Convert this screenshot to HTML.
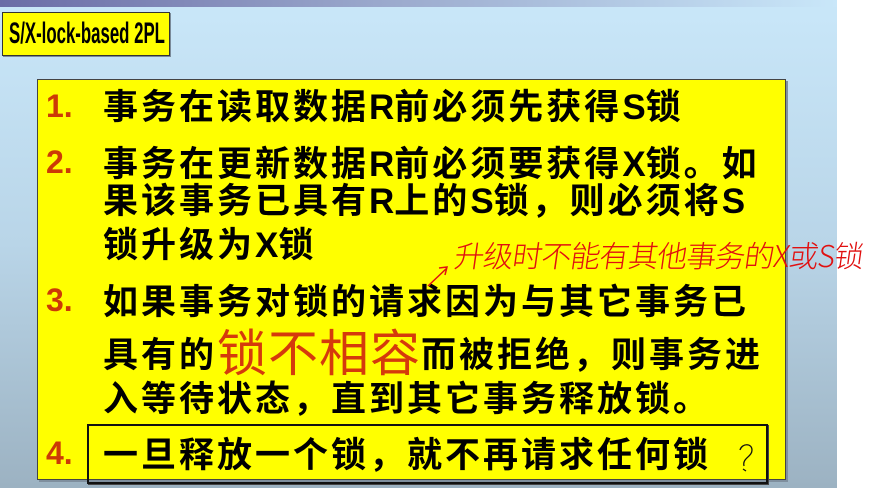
<!DOCTYPE html>
<html><head><meta charset="utf-8"><style>
*{margin:0;padding:0}
body{width:877px;height:488px;overflow:hidden;background:#fff;position:relative;font-family:"Liberation Sans","Noto Sans CJK SC",sans-serif}
#slide{position:absolute;left:0;top:0;width:837px;height:488px;background:linear-gradient(#c9e7f9,#b9d5e8 50%,#9cb2c2)}
#bar{position:absolute;left:0;top:0;width:837px;height:7px;background:linear-gradient(90deg,#6a6ca6,#9aa8cc 45%,#c9e7f9)}
#title{position:absolute;left:2px;top:12px;width:166px;height:42px;background:#ffff00;border:1px solid #333;box-shadow:1px 1px 0 #7a8a99}
#title span{position:absolute;left:6px;top:5px;font-size:30px;font-weight:bold;white-space:nowrap;transform:scaleX(0.56);transform-origin:left top;line-height:32px}
#box{position:absolute;left:37px;top:79px;width:747px;height:399px;background:#ffff00;border:1px solid #444;box-shadow:2px 2px 0 #7f8f9e}
#box4{position:absolute;left:87px;top:424px;width:677px;height:56px;border:2px solid #111;box-shadow:1px 1px 0 #444}
.l{position:absolute;left:103px;font-family:"Noto Sans CJK SC",sans-serif;font-weight:bold;font-size:35px;letter-spacing:3px;white-space:nowrap;line-height:44px;color:#000}
.e{font-family:"Liberation Sans",sans-serif;letter-spacing:0;font-size:35px}
.n{position:absolute;left:46px;font-weight:bold;font-size:32px;color:#cc3a06;line-height:44px}
.big{font-size:50px;color:#d53a0c;font-weight:normal;letter-spacing:1px;vertical-align:-4px}
.hand{position:absolute;left:455px;top:232px;font-family:"Noto Sans CJK SC",sans-serif;font-weight:300;font-size:30px;color:#e01010;letter-spacing:-1px;white-space:nowrap;transform:skewX(-8deg)}
</style></head><body>
<div id="slide"></div><div id="bar"></div>
<div id="title"><span>S/X-lock-based 2PL</span></div>
<div id="box"></div>
<div id="box4"></div>
<div class="n" style="top:84px">1.</div>
<div class="l" style="top:83px">事务在读取数据<span class="e">R</span>前必须先获得<span class="e">S</span>锁</div>
<div class="n" style="top:140px">2.</div>
<div class="l" style="top:140px">事务在更新数据<span class="e">R</span>前必须要获得<span class="e">X</span>锁。如</div>
<div class="l" style="top:177px">果该事务已具有<span class="e">R</span>上的<span class="e">S</span>锁，则必须将<span class="e">S</span></div>
<div class="l" style="top:221px">锁升级为<span class="e">X</span>锁</div>
<div class="n" style="top:278px">3.</div>
<div class="l" style="top:278px">如果事务对锁的请求因为与其它事务已</div>
<div class="l" style="top:328px">具有的<span class="big">锁不相容</span>而被拒绝，则事务进</div>
<div class="l" style="top:375px">入等待状态，直到其它事务释放锁。</div>
<div class="n" style="top:431px">4.</div>
<div class="l" style="top:431px">一旦释放一个锁，就不再请求任何锁</div>
<div class="hand">升级时不能有其他事务的X或S锁</div>
<svg style="position:absolute;left:425px;top:260px" width="40" height="30"><path d="M3 26 L22 8 M14 8 L22 7 L20 15" stroke="#e01010" stroke-width="1.5" fill="none"/></svg>
<svg style="position:absolute;left:732px;top:440px" width="30" height="35"><path d="M8 10 C10 3 20 3 20 10 C20 17 10 18 12 26 M11 29 L14 31" stroke="#111" stroke-width="1.3" fill="none"/></svg>
</body></html>
